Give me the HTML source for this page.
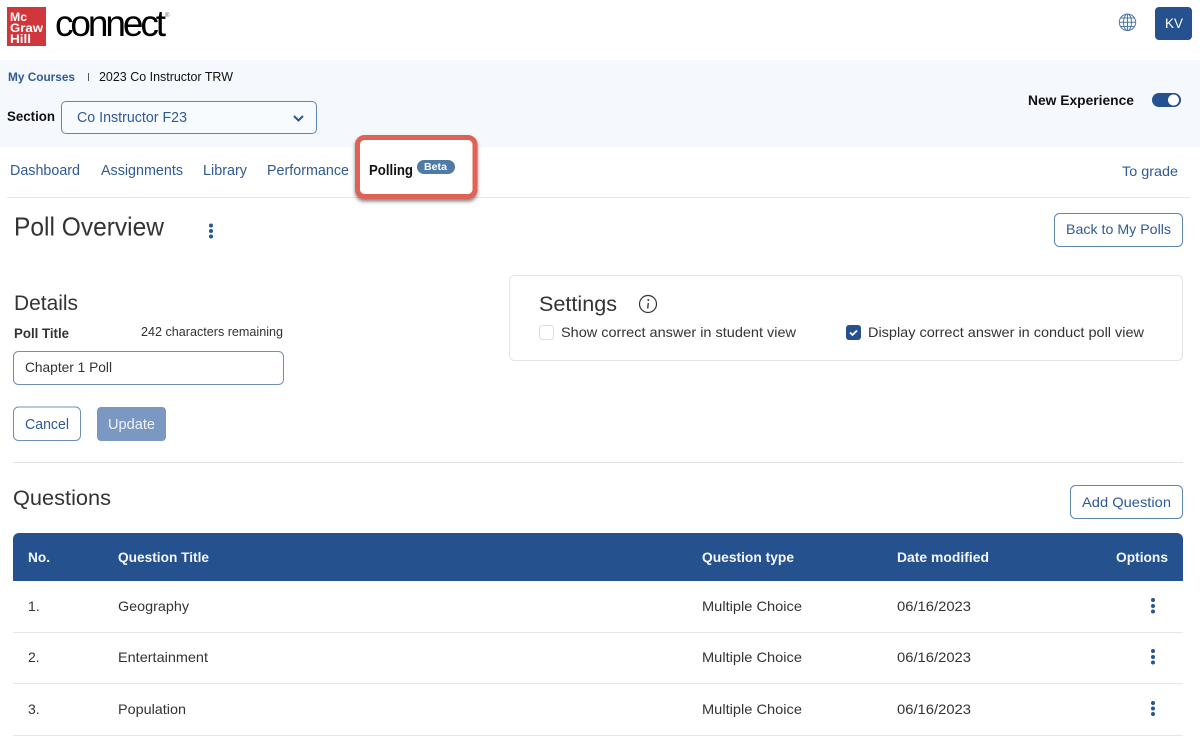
<!DOCTYPE html>
<html lang="en"><head><meta charset="utf-8"><title>Poll Overview</title>
<style>
html,body{margin:0;padding:0;background:#fff;width:1200px;height:745px;overflow:hidden}
svg{display:block}
text{font-family:"Liberation Sans",sans-serif;font-size:14px;fill:#333}
.b{fill:#2f5a94}.w{font-weight:700}.k{fill:#111}
.hd{fill:#f4f8fd;font-weight:700;font-size:14px}
</style></head><body>
<svg width="1200" height="745" viewBox="0 0 1200 745" xmlns="http://www.w3.org/2000/svg">
<defs><filter id="s" x="-20%" y="-20%" width="140%" height="140%"><feDropShadow dx="0" dy="2.500" stdDeviation="1.800" flood-color="#333" flood-opacity=".6"/></filter></defs>
<rect width="1200" height="745" fill="#fff"/>
<rect x="0" y="60" width="1200" height="87" fill="#f5f9fd"/>
<!-- logo -->
<rect x="7" y="7" width="39" height="39" fill="#d0363a"/>
<text x="10" y="21" style="font-size:11.500px;font-weight:700;fill:#fff" textLength="17" lengthAdjust="spacingAndGlyphs">Mc</text>
<text x="10" y="32" style="font-size:11.500px;font-weight:700;fill:#fff" textLength="33" lengthAdjust="spacingAndGlyphs">Graw</text>
<text x="10" y="43" style="font-size:11.500px;font-weight:700;fill:#fff" textLength="21" lengthAdjust="spacingAndGlyphs">Hill</text>
<text x="55" y="36" style="font-size:37px;fill:#000" textLength="111" lengthAdjust="spacing">connect</text>
<text x="165" y="17" style="font-size:6px;fill:#555">®</text>
<!-- globe -->
<g fill="none" stroke="#4f78a8" stroke-width="1"><circle cx="1127.500" cy="22.300" r="8.200"/><ellipse cx="1127.500" cy="22.300" rx="4" ry="8.200"/><path d="M1127.500 14v16.500M1119.500 22.300h16M1120.500 18h14M1120.500 26.500h14"/></g>
<rect x="1155" y="7" width="37" height="33" rx="4" fill="#25518f"/>
<text x="1165" y="28" style="font-size:14px;fill:#fff" textLength="18" lengthAdjust="spacingAndGlyphs">KV</text>
<!-- breadcrumb -->
<text x="8" y="81" class="b w" style="font-size:12px" textLength="67" lengthAdjust="spacingAndGlyphs">My Courses</text>
<rect x="88" y="73" width="1" height="8" fill="#555"/>
<text x="99" y="81" class="k" style="font-size:12.500px" textLength="134" lengthAdjust="spacingAndGlyphs">2023 Co Instructor TRW</text>
<text x="7" y="121" class="k w" textLength="48" lengthAdjust="spacingAndGlyphs">Section</text>
<rect x="61.500" y="101.500" width="255" height="32" rx="4.500" fill="#f8fbfe" stroke="#5f86b3"/>
<text x="77" y="122" class="b" style="font-size:14.500px" textLength="110" lengthAdjust="spacingAndGlyphs">Co Instructor F23</text>
<path d="M294 116l4.500 4.500 4.500-4.500" fill="none" stroke="#2a5490" stroke-width="2"/>
<text x="1028" y="105" class="k w" textLength="106" lengthAdjust="spacingAndGlyphs">New Experience</text>
<rect x="1152" y="93" width="29" height="14" rx="7" fill="#25518f"/>
<circle cx="1173.500" cy="100" r="5.500" fill="#fff"/>
<!-- nav -->
<text x="10" y="175" class="b" style="font-size:14.500px" textLength="70" lengthAdjust="spacingAndGlyphs">Dashboard</text>
<text x="101" y="175" class="b" style="font-size:14.500px" textLength="82" lengthAdjust="spacingAndGlyphs">Assignments</text>
<text x="203" y="175" class="b" style="font-size:14.500px" textLength="44" lengthAdjust="spacingAndGlyphs">Library</text>
<text x="267" y="175" class="b" style="font-size:14.500px" textLength="82" lengthAdjust="spacingAndGlyphs">Performance</text>
<text x="1122" y="176" class="b" style="font-size:14px" textLength="56" lengthAdjust="spacingAndGlyphs">To grade</text>
<rect x="7" y="197" width="1183" height="1" fill="#e8e8e8"/>
<rect x="357.500" y="137.500" width="117.500" height="59" rx="7" fill="#fff" stroke="#df6256" stroke-width="5" filter="url(#s)"/>
<text x="369" y="175" class="k w" style="font-size:14.500px" textLength="44" lengthAdjust="spacingAndGlyphs">Polling</text>
<rect x="417" y="160" width="38" height="14" rx="7" fill="#4f7ba6"/>
<text x="424" y="170" style="font-size:10px;font-weight:700;fill:#fff" textLength="23" lengthAdjust="spacingAndGlyphs">Beta</text>
<!-- overview -->
<text x="14" y="235.500" style="font-size:26px" textLength="150" lengthAdjust="spacingAndGlyphs">Poll Overview</text>
<circle cx="211" cy="225.500" r="2" fill="#2a5490"/><circle cx="211" cy="231" r="2" fill="#2a5490"/><circle cx="211" cy="236.500" r="2" fill="#2a5490"/>
<rect x="1054.500" y="213.500" width="128" height="33" rx="5" fill="#fff" stroke="#5f86b3"/>
<text x="1066" y="234" class="b" textLength="105" lengthAdjust="spacingAndGlyphs">Back to My Polls</text>
<!-- details -->
<text x="14" y="310" style="font-size:21px" textLength="64" lengthAdjust="spacingAndGlyphs">Details</text>
<text x="14" y="338" class="w" style="font-size:13.500px" textLength="55" lengthAdjust="spacingAndGlyphs">Poll Title</text>
<text x="141" y="336" style="font-size:12.500px" textLength="142" lengthAdjust="spacingAndGlyphs">242 characters remaining</text>
<rect x="13.500" y="351.500" width="270" height="33" rx="5" fill="#fff" stroke="#6d90b8"/>
<text x="25" y="372" textLength="87" lengthAdjust="spacingAndGlyphs">Chapter 1 Poll</text>
<rect x="13.500" y="407" width="67" height="33.500" rx="5" fill="#fff" stroke="#6d90b8"/>
<text x="25" y="429" class="b" style="font-size:14.500px" textLength="44" lengthAdjust="spacingAndGlyphs">Cancel</text>
<rect x="97" y="407" width="69" height="34" rx="4" fill="#7b98c2"/>
<text x="108" y="429" style="font-size:14.500px;fill:#eef2f8" textLength="47" lengthAdjust="spacingAndGlyphs">Update</text>
<!-- settings -->
<rect x="509.500" y="275.500" width="673" height="85" rx="5" fill="#fff" stroke="#e4e4e4"/>
<text x="539" y="311" style="font-size:21.500px" textLength="78" lengthAdjust="spacingAndGlyphs">Settings</text>
<circle cx="648" cy="304" r="8.500" fill="none" stroke="#333" stroke-width="1.200"/>
<circle cx="648.300" cy="300" r="1" fill="#333"/>
<path d="M648.300 303l-.6 5.500" stroke="#333" stroke-width="1.300" fill="none"/>
<rect x="539.500" y="325.500" width="14" height="14" rx="3" fill="#fff" stroke="#ddd"/>
<text x="561" y="337" textLength="235" lengthAdjust="spacingAndGlyphs">Show correct answer in student view</text>
<rect x="846" y="325" width="15" height="15" rx="3" fill="#25518f"/>
<path d="M850 332.500l2.500 2.500 4.500-4.500" fill="none" stroke="#fff" stroke-width="1.800"/>
<text x="868" y="337" textLength="276" lengthAdjust="spacingAndGlyphs">Display correct answer in conduct poll view</text>
<rect x="13" y="462" width="1170" height="1" fill="#e2e2e2"/>
<!-- questions -->
<text x="13" y="505" style="font-size:21.500px" textLength="98" lengthAdjust="spacingAndGlyphs">Questions</text>
<rect x="1070.500" y="485.500" width="112" height="33" rx="5" fill="#fff" stroke="#5f86b3"/>
<text x="1082" y="507" class="b" textLength="89" lengthAdjust="spacingAndGlyphs">Add Question</text>
<path d="M13 581V539a6 6 0 0 1 6-6H1177a6 6 0 0 1 6 6V581Z" fill="#25518f"/>
<text x="28" y="562" class="hd" textLength="22" lengthAdjust="spacingAndGlyphs">No.</text>
<text x="118" y="562" class="hd" textLength="91" lengthAdjust="spacingAndGlyphs">Question Title</text>
<text x="702" y="562" class="hd" textLength="92" lengthAdjust="spacingAndGlyphs">Question type</text>
<text x="897" y="562" class="hd" textLength="92" lengthAdjust="spacingAndGlyphs">Date modified</text>
<text x="1116" y="562" class="hd" textLength="52" lengthAdjust="spacingAndGlyphs">Options</text>
<!-- rows -->
<text x="28" y="611">1.</text>
<text x="118" y="611" textLength="71" lengthAdjust="spacingAndGlyphs">Geography</text>
<text x="702" y="611" textLength="100" lengthAdjust="spacingAndGlyphs">Multiple Choice</text>
<text x="897" y="611" textLength="74" lengthAdjust="spacingAndGlyphs">06/16/2023</text>
<circle cx="1153" cy="600" r="2" fill="#2a5490"/><circle cx="1153" cy="606" r="2" fill="#2a5490"/><circle cx="1153" cy="611.500" r="2" fill="#2a5490"/>
<rect x="13" y="632" width="1170" height="1" fill="#e8e8e8"/>
<text x="28" y="662">2.</text>
<text x="118" y="662" textLength="90" lengthAdjust="spacingAndGlyphs">Entertainment</text>
<text x="702" y="662" textLength="100" lengthAdjust="spacingAndGlyphs">Multiple Choice</text>
<text x="897" y="662" textLength="74" lengthAdjust="spacingAndGlyphs">06/16/2023</text>
<circle cx="1153" cy="651" r="2" fill="#2a5490"/><circle cx="1153" cy="657" r="2" fill="#2a5490"/><circle cx="1153" cy="662.500" r="2" fill="#2a5490"/>
<rect x="13" y="683" width="1170" height="1" fill="#e8e8e8"/>
<text x="28" y="714">3.</text>
<text x="118" y="714" textLength="68" lengthAdjust="spacingAndGlyphs">Population</text>
<text x="702" y="714" textLength="100" lengthAdjust="spacingAndGlyphs">Multiple Choice</text>
<text x="897" y="714" textLength="74" lengthAdjust="spacingAndGlyphs">06/16/2023</text>
<circle cx="1153" cy="703" r="2" fill="#2a5490"/><circle cx="1153" cy="708.500" r="2" fill="#2a5490"/><circle cx="1153" cy="714" r="2" fill="#2a5490"/>
<rect x="13" y="735" width="1170" height="1" fill="#e8e8e8"/>
</svg>
</body></html>
